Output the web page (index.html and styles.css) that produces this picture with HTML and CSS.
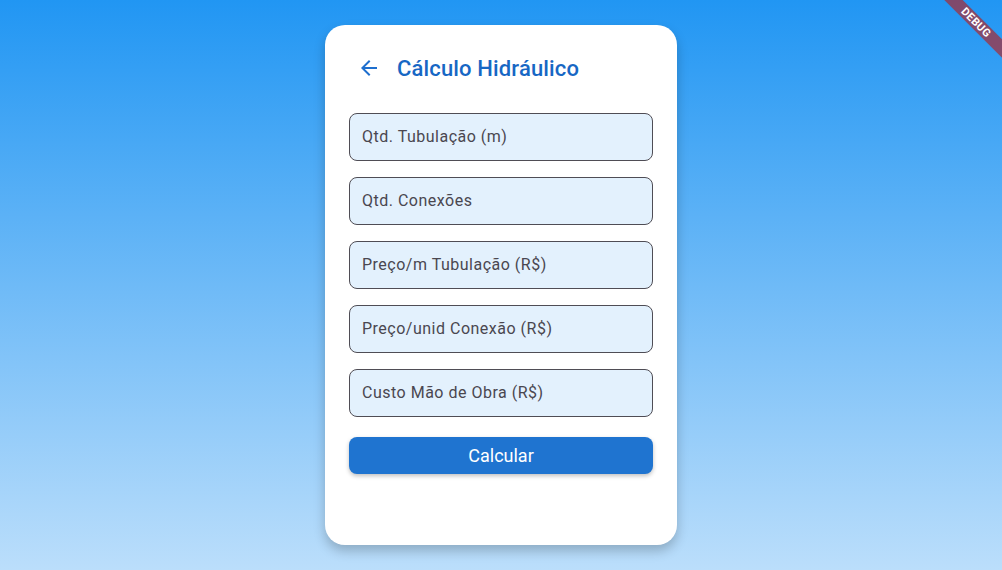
FILE: index.html
```html
<!DOCTYPE html>
<html lang="pt">
  <head>
    <meta charset="UTF-8" />
    <meta name="viewport" content="width=device-width, initial-scale=1.0" />
    <title>Cálculo Hidráulico</title>
    <link rel="stylesheet" href="styles.css">
  </head>
  <body>
    <div class="card">
      <div class="header">
        <button class="back" aria-label="Voltar">
          <svg width="24" height="24" viewBox="0 0 24 24">
            <path d="M20 11H7.83l5.59-5.59L12 4l-8 8 8 8 1.41-1.41L7.83 13H20v-2z" fill="#1e6fce" />
          </svg>
        </button>
        <h1 class="title">Cálculo Hidráulico</h1>
      </div>

      <div class="form">
        <input class="field" type="text" placeholder="Qtd. Tubulação (m)" />
        <input class="field" type="text" placeholder="Qtd. Conexões" />
        <input class="field" type="text" placeholder="Preço/m Tubulação (R$)" />
        <input class="field" type="text" placeholder="Preço/unid Conexão (R$)" />
        <input class="field" type="text" placeholder="Custo Mão de Obra (R$)" />
        <button class="submit">Calcular</button>
      </div>
    </div>

    <div class="debug">DEBUG</div>
  </body>
</html>
```

FILE: styles.css
```css
body {
  margin: 0;
  height: 570px;
  font-family: Roboto, "Noto Sans", sans-serif;
  background: linear-gradient(to bottom, #2196f3, #bbdefb);
  display: flex;
  justify-content: center;
  align-items: flex-start;
  overflow: hidden;
  position: relative;
}
.card {
  margin-top: 25px;
  width: 352px;
  height: 520px;
  box-sizing: border-box;
  padding: 24px;
  background-color: #fff;
  border-radius: 20px;
  box-shadow: 0px 6px 12px rgba(0, 0, 0, 0.22);
}
.header {
  display: flex;
  align-items: center;
  height: 40px;
  gap: 8px;
  margin-top: -1px;
  margin-bottom: 25px;
}
.back {
  width: 40px;
  height: 40px;
  border: none;
  background: none;
  padding: 0;
  display: flex;
  align-items: center;
  justify-content: center;
  cursor: pointer;
}
.title {
  margin: 0;
  font-size: 22px;
  font-weight: 500;
  letter-spacing: 0.15px;
  color: #1767c4;
}
.form {
  display: flex;
  flex-direction: column;
  gap: 16px;
}
.field {
  height: 48px;
  box-sizing: border-box;
  padding: 0 12px 2px;
  font-family: Roboto, "Noto Sans", sans-serif;
  font-size: 16px;
  border: 1px solid #4f4d55;
  border-radius: 8px;
  background-color: #e3f1fd;
  outline: none;
}
.field::placeholder {
  color: #4a4750;
  letter-spacing: 0.5px;
}
.submit {
  margin-top: 4px;
  height: 37px;
  border: none;
  border-radius: 8px;
  background-color: #1f74d0;
  color: #fff;
  font-family: Roboto, "Noto Sans", sans-serif;
  font-size: 18px;
  box-shadow: 0px 2px 4px rgba(0, 0, 0, 0.25);
  cursor: pointer;
}
.debug {
  position: absolute;
  top: 16px;
  right: -24px;
  width: 100px;
  transform: rotate(45deg);
  background-color: rgba(183, 28, 28, 0.63);
  color: #fff;
  font-size: 11px;
  font-weight: 700;
  text-align: center;
  line-height: 13px;
  letter-spacing: 0.3px;
}
```
